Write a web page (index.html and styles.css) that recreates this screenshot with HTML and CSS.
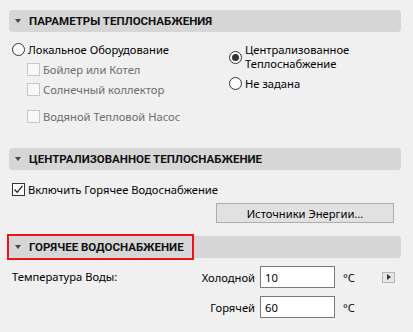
FILE: index.html
```html
<!DOCTYPE html>
<html lang="ru">
<head>
  <meta charset="UTF-8">
  <title>Теплоснабжение</title>
  <link rel="stylesheet" href="styles.css">
</head>
<body>

  <div class="panel">
    <div class="header"><span class="tri"></span>ПАРАМЕТРЫ ТЕПЛОСНАБЖЕНИЯ</div>
    <div class="supply">
      <div class="col-left">
        <div class="row"><span class="radio"></span>Локальное Оборудование</div>
        <div class="row sub disabled"><span class="check"></span>Бойлер или Котел</div>
        <div class="row sub disabled"><span class="check"></span>Солнечный коллектор</div>
        <div class="row sub disabled gap"><span class="check"></span>Водяной Тепловой Насос</div>
      </div>
      <div class="col-right">
        <div class="row two"><span class="radio on"></span><span>Централизованное<br>Теплоснабжение</span></div>
        <div class="row none"><span class="radio"></span>Не задана</div>
      </div>
    </div>

    <div class="header"><span class="tri"></span>ЦЕНТРАЛИЗОВАННОЕ ТЕПЛОСНАБЖЕНИЕ</div>
    <div class="central">
      <div class="row"><span class="check checked"><svg width="11" height="11" viewBox="0 0 11 11"><path d="M1.5 5.5 L4.2 8.3 L9.5 1.8" fill="none" stroke="#222" stroke-width="1.3"/></svg></span>Включить Горячее Водоснабжение</div>
      <div class="btn-row"><button class="btn">Источники Энергии...</button></div>
    </div>

    <div class="header"><span class="highlight"><span class="tri"></span>ГОРЯЧЕЕ ВОДОСНАБЖЕНИЕ</span></div>
    <div class="water">
      <div class="water-label">Температура Воды:</div>
      <div class="temps">
        <label class="tname">Холодной</label>
        <input class="tval" type="text" value="10">
        <span class="unit">°C</span>
        <span class="more"></span>
        <label class="tname">Горячей</label>
        <input class="tval" type="text" value="60">
        <span class="unit">°C</span>
        <span></span>
      </div>
    </div>
  </div>

</body>
</html>
```

FILE: styles.css
```css
body {
  margin: 0;
  background: #f0f0f0;
  font-family: "Noto Sans", "Open Sans", sans-serif;
  font-size: 11.2px;
  color: #000;
}
.panel {
  padding: 10px 12px 0 9px;
}
.header {
  height: 22px;
  background: #d6d6d6;
  border-radius: 4px;
  display: flex;
  align-items: center;
  font-family: Roboto, "Noto Sans", sans-serif;
  font-weight: bold;
  font-size: 11.5px;
  color: #111;
  white-space: nowrap;
}
.tri {
  display: inline-block;
  width: 0;
  height: 0;
  border-left: 3.5px solid transparent;
  border-right: 3.5px solid transparent;
  border-top: 4px solid #444;
  margin: 0 8px 0 6px;
}
.highlight {
  display: flex;
  align-items: center;
  width: 183px;
  height: 22px;
  outline: 2px solid #e8141c;
}
.row {
  display: flex;
  align-items: center;
  height: 18px;
  white-space: nowrap;
}
.radio {
  width: 11px;
  height: 11px;
  border: 1px solid #333;
  border-radius: 50%;
  background: #fff;
  margin-right: 3px;
  flex: none;
  display: flex;
  align-items: center;
  justify-content: center;
}
.radio.on::after {
  content: "";
  width: 7px;
  height: 7px;
  border-radius: 50%;
  background: #333;
}
.check {
  width: 11px;
  height: 11px;
  border: 1px solid #333;
  background: #fff;
  margin-right: 3px;
  flex: none;
  display: flex;
  align-items: center;
  justify-content: center;
}
.supply {
  display: flex;
  padding: 8px 0 0 3px;
  height: 108px;
}
.col-left {
  width: 217px;
}
.col-right {
  flex: 1;
  padding-top: 3px;
}
.sub {
  margin-top: 2px;
  padding-left: 15px;
}
.sub.gap {
  margin-top: 9px;
}
.disabled {
  color: #6d6d6d;
}
.disabled .check {
  border-color: #c8c8c8;
  background: #f8f8f8;
}
.two {
  height: 28px;
  line-height: 14px;
}
.none {
  margin-top: 3px;
}
.central {
  padding: 10px 0 13px 3px;
}
.btn-row {
  display: flex;
  justify-content: flex-end;
  padding-right: 7px;
  margin-top: 5px;
}
.btn {
  width: 178px;
  height: 20px;
  background: #e1e1e1;
  border: 1px solid #adadad;
  font-family: inherit;
  font-size: 11.2px;
  color: #000;
  padding: 0;
}
.water {
  display: flex;
  padding: 8px 0 0 3px;
}
.water-label {
  width: 160px;
  height: 22px;
  line-height: 22px;
}
.temps {
  display: grid;
  grid-template-columns: 88px 79px 43px 13px;
  row-gap: 8px;
  align-items: center;
}
.tname {
  text-align: right;
  padding-right: 5px;
}
.tval {
  width: 75px;
  height: 22px;
  box-sizing: border-box;
  border: 1px solid #7a7a7a;
  background: #fff;
  font-family: inherit;
  font-size: 11.2px;
  padding: 0 4px;
  margin: 0;
}
.unit {
  padding-left: 4px;
}
.more {
  width: 11px;
  height: 9px;
  border: 1px solid #b5b5b5;
  background: #e6e6e6;
  display: flex;
  align-items: center;
  justify-content: center;
}
.more::after {
  content: "";
  border-top: 3px solid transparent;
  border-bottom: 3px solid transparent;
  border-left: 4px solid #333;
}
```
